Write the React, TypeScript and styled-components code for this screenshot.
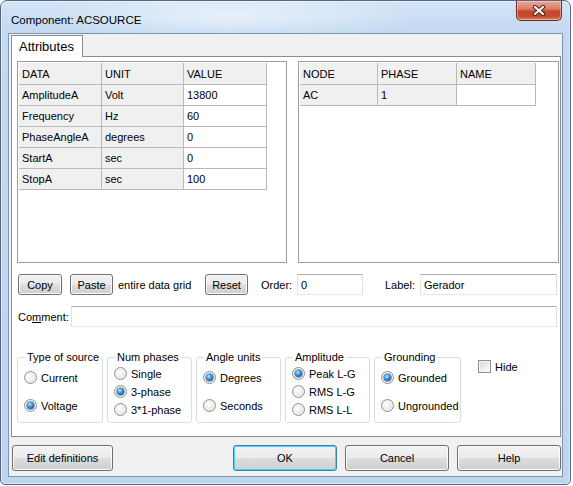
import styled, { createGlobalStyle } from "styled-components";

const GlobalStyle = createGlobalStyle`
  html, body {
    margin: 0;
    padding: 0;
    background: #ffffff;
  }
  body {
    font-family: "Liberation Sans", Arial, sans-serif;
    font-size: 11px;
    color: #000000;
  }
`;

type GridRow = { cells: string[] };

const dataCols = ["DATA", "UNIT", "VALUE"];
const dataRows: GridRow[] = [
  { cells: ["AmplitudeA", "Volt", "13800"] },
  { cells: ["Frequency", "Hz", "60"] },
  { cells: ["PhaseAngleA", "degrees", "0"] },
  { cells: ["StartA", "sec", "0"] },
  { cells: ["StopA", "sec", "100"] }
];

const nodeCols = ["NODE", "PHASE", "NAME"];
const nodeRows: GridRow[] = [{ cells: ["AC", "1", ""] }];

type Group = {
  title: string;
  width: number;
  first: number;
  gap: number;
  options: { label: string; on?: boolean }[];
};

const groups: Group[] = [
  {
    title: "Type of source",
    width: 86,
    first: 7,
    gap: 15,
    options: [{ label: "Current" }, { label: "Voltage", on: true }]
  },
  {
    title: "Num phases",
    width: 85,
    first: 3,
    gap: 5,
    options: [{ label: "Single" }, { label: "3-phase", on: true }, { label: "3*1-phase" }]
  },
  {
    title: "Angle units",
    width: 85,
    first: 7,
    gap: 15,
    options: [{ label: "Degrees", on: true }, { label: "Seconds" }]
  },
  {
    title: "Amplitude",
    width: 85,
    first: 3,
    gap: 5,
    options: [{ label: "Peak L-G", on: true }, { label: "RMS L-G" }, { label: "RMS L-L" }]
  },
  {
    title: "Grounding",
    width: 87,
    first: 7,
    gap: 15,
    options: [{ label: "Grounded", on: true }, { label: "Ungrounded" }]
  }
];

const App = () => {
  return (
    <>
      <GlobalStyle />
      <Window>
        <TitleBar>
          <TitleText>Component: ACSOURCE</TitleText>
          <CloseButton>
            <svg width="14" height="11" viewBox="0 0 14 11">
              <path d="M3 2 L11 9 M11 2 L3 9" stroke="#4a2218" strokeWidth="4.2" strokeLinecap="round" fill="none" />
              <path d="M3 2 L11 9 M11 2 L3 9" stroke="#ffffff" strokeWidth="2.2" strokeLinecap="round" fill="none" />
            </svg>
          </CloseButton>
        </TitleBar>
        <Client>
          <TabStrip>
            <Tab>Attributes</Tab>
          </TabStrip>
          <Panel>
            <GridsRow>
              <GridBox $w={270}>
                <DataGrid $cols="83px 82px 83px">
                  {dataCols.map((c) => (
                    <Cell key={c} $head $fixed>{c}</Cell>
                  ))}
                  {dataRows.map((r) =>
                    r.cells.map((c, i) => (
                      <Cell key={r.cells[0] + i} $fixed={i < 2}>{c}</Cell>
                    ))
                  )}
                </DataGrid>
              </GridBox>
              <GridBox $w={261}>
                <DataGrid $cols="78px 79px 79px">
                  {nodeCols.map((c) => (
                    <Cell key={c} $head $fixed>{c}</Cell>
                  ))}
                  {nodeRows.map((r) =>
                    r.cells.map((c, i) => (
                      <Cell key={r.cells[0] + i} $fixed={i < 2}>{c}</Cell>
                    ))
                  )}
                </DataGrid>
              </GridBox>
            </GridsRow>

            <ControlRow $top={11}>
              <PushButton $w={44} $ml={1}>Copy</PushButton>
              <PushButton $w={43} $ml={8}>Paste</PushButton>
              <Caption $w={87} $ml={5}>entire data grid</Caption>
              <PushButton $w={43}>Reset</PushButton>
              <Caption $w={36} $ml={13}>Order:</Caption>
              <TextBox $w={66} defaultValue="0" />
              <Caption $w={35} $ml={22}>Label:</Caption>
              <TextBox $w={137} defaultValue="Gerador" />
            </ControlRow>

            <ControlRow $top={11}>
              <Caption $w={53} $ml={1}>
                Co<u>m</u>ment:
              </Caption>
              <TextBox $w={486} defaultValue="" />
            </ControlRow>

            <GroupsRow>
              {groups.map((g) => (
                <GroupBox key={g.title} $w={g.width}>
                  <Legend>{g.title}</Legend>
                  <OptionList $first={g.first} $gap={g.gap}>
                    {g.options.map((o) => (
                      <Option key={o.label}>
                        <RadioMark $on={o.on} />
                        <span>{o.label}</span>
                      </Option>
                    ))}
                  </OptionList>
                </GroupBox>
              ))}
              <HideCheck>
                <CheckMark />
                <span>Hide</span>
              </HideCheck>
            </GroupsRow>
          </Panel>

          <BottomBar>
            <PushButton $w={101} $h={26} $ml={1}>Edit definitions</PushButton>
            <Spacer />
            <PushButton $w={104} $h={26} $default>OK</PushButton>
            <PushButton $w={104} $h={26} $ml={8}>Cancel</PushButton>
            <PushButton $w={104} $h={26} $ml={8}>Help</PushButton>
          </BottomBar>
        </Client>
      </Window>
    </>
  );
};

export default App;

const Window = styled.div`
  width: 571px;
  height: 485px;
  box-sizing: border-box;
  border: 1px solid #56677e;
  border-radius: 7px 7px 5px 5px;
  padding: 0 7px 7px;
  display: flex;
  flex-direction: column;
  background:
    radial-gradient(ellipse 190px 26px at 230px 15px, rgba(255, 255, 255, 0.55), rgba(255, 255, 255, 0) 100%),
    linear-gradient(180deg, #d3e4f7 0px, #c3d9f1 31px, #bdd5f0 100%);
  box-shadow: inset 0 0 0 1px rgba(255, 255, 255, 0.45);
`;

const TitleBar = styled.div`
  height: 32px;
  display: flex;
  justify-content: space-between;
  align-items: flex-start;
  flex: none;
`;

const TitleText = styled.div`
  margin-left: 3px;
  padding-top: 12px;
  font-size: 11.5px;
  line-height: 14px;
  color: #000000;
`;

const CloseButton = styled.div`
  width: 46px;
  height: 20px;
  margin-right: 1px;
  box-sizing: border-box;
  border: 1px solid #6a2a1f;
  border-top: none;
  border-radius: 0 0 5px 5px;
  display: flex;
  align-items: center;
  justify-content: center;
  background: linear-gradient(180deg, #e9a99a 0%, #dc7f69 40%, #c7462b 55%, #c64a2f 80%, #d8846a 100%);
  box-shadow: inset 0 0 0 1px rgba(255, 220, 210, 0.5);
`;

const Client = styled.div`
  flex: 1;
  box-sizing: border-box;
  background: #f0f0f0;
  border: 1px solid #8194ad;
  padding: 1px 1px 0 2px;
  display: flex;
  flex-direction: column;
`;

const TabStrip = styled.div`
  display: flex;
  height: 22px;
  margin-bottom: -1px;
  position: relative;
  z-index: 1;
`;

const Tab = styled.div`
  box-sizing: border-box;
  height: 22px;
  padding: 0 8px 0 7px;
  border: 1px solid #898c95;
  border-bottom: none;
  background: #ffffff;
  font-size: 13px;
  line-height: 21px;
`;

const Panel = styled.div`
  width: 550px;
  height: 381px;
  box-sizing: border-box;
  border: 1px solid #898c95;
  background: #ffffff;
  padding: 4px 0 0 5px;
  display: flex;
  flex-direction: column;
`;

const GridsRow = styled.div`
  display: flex;
  gap: 11px;
  height: 202px;
`;

const GridBox = styled.div<{ $w: number }>`
  width: ${(p) => p.$w}px;
  height: 100%;
  box-sizing: border-box;
  border: 1px solid #9c9c9c;
  padding: 1px;
  background: #ffffff;
`;

const DataGrid = styled.div<{ $cols: string }>`
  display: grid;
  grid-template-columns: ${(p) => p.$cols};
`;

const Cell = styled.div<{ $head?: boolean; $fixed?: boolean }>`
  height: ${(p) => (p.$head ? 22 : 21)}px;
  box-sizing: border-box;
  border-right: 1px solid #b9b9b9;
  border-bottom: 1px solid #b9b9b9;
  background: ${(p) => (p.$fixed ? "#f0f0f0" : "#ffffff")};
  padding: 0 3px;
  display: flex;
  align-items: center;
  white-space: nowrap;
  overflow: hidden;
`;

const ControlRow = styled.div<{ $top: number }>`
  display: flex;
  align-items: center;
  height: 21px;
  margin-top: ${(p) => p.$top}px;
`;

const Caption = styled.div<{ $w: number; $ml?: number }>`
  width: ${(p) => p.$w}px;
  margin-left: ${(p) => p.$ml ?? 0}px;
  flex: none;
  white-space: nowrap;
`;

const PushButton = styled.div<{ $w: number; $h?: number; $ml?: number; $default?: boolean }>`
  width: ${(p) => p.$w}px;
  height: ${(p) => p.$h ?? 21}px;
  margin-left: ${(p) => p.$ml ?? 0}px;
  flex: none;
  box-sizing: border-box;
  border: 1px solid ${(p) => (p.$default ? "#3c7fb1" : "#707070")};
  border-radius: 3px;
  display: flex;
  align-items: center;
  justify-content: center;
  background: linear-gradient(180deg, #f2f2f2 0%, #ebebeb 48%, #dddddd 52%, #cfcfcf 100%);
  box-shadow: inset 0 0 0 1px ${(p) => (p.$default ? "#48d2f6" : "#fbfbfb")};
`;

const TextBox = styled.input<{ $w: number }>`
  width: ${(p) => p.$w}px;
  height: 21px;
  flex: none;
  box-sizing: border-box;
  margin: 0;
  padding: 0 3px;
  border: 1px solid;
  border-color: #abadb3 #dbdfe6 #e3e9ef #e2e3ea;
  background: #ffffff;
  font-family: "Liberation Sans", Arial, sans-serif;
  font-size: 11px;
  color: #000000;
  outline: none;
`;

const GroupsRow = styled.div`
  display: flex;
  align-items: flex-start;
  gap: 4px;
  margin-top: 30px;
`;

const GroupBox = styled.div<{ $w: number }>`
  width: ${(p) => p.$w}px;
  height: 66px;
  box-sizing: border-box;
  border: 1px solid #d5dfe5;
  border-radius: 3px;
  padding-left: 6px;
  display: flex;
  flex-direction: column;
  align-items: flex-start;
`;

const Legend = styled.div`
  margin-top: -7px;
  margin-left: 1px;
  padding: 0 2px;
  background: #ffffff;
  line-height: 13px;
  white-space: nowrap;
`;

const OptionList = styled.div<{ $first: number; $gap: number }>`
  display: flex;
  flex-direction: column;
  gap: ${(p) => p.$gap}px;
  margin-top: ${(p) => p.$first}px;
`;

const Option = styled.div`
  display: flex;
  align-items: center;
  gap: 4px;
  height: 13px;
  white-space: nowrap;
`;

const RadioMark = styled.span<{ $on?: boolean }>`
  width: 13px;
  height: 13px;
  flex: none;
  box-sizing: border-box;
  border-radius: 50%;
  border: 1px solid #8e8f8f;
  background: radial-gradient(circle at 40% 40%, #ffffff 0%, #eeeeee 45%, #cfcfcf 100%);
  box-shadow: inset 0 0 0 1px #f4f4f4;
  display: flex;
  align-items: center;
  justify-content: center;

  &::after {
    content: "";
    display: ${(p) => (p.$on ? "block" : "none")};
    width: 7px;
    height: 7px;
    border-radius: 50%;
    background: radial-gradient(circle at 40% 35%, #b8ecff 0%, #3c95dc 40%, #16508f 85%);
    box-shadow: 0 0 0 0.5px #1c4a7d;
  }
`;

const HideCheck = styled.div`
  display: flex;
  align-items: center;
  gap: 4px;
  margin-left: 13px;
  margin-top: 3px;
  height: 13px;
`;

const CheckMark = styled.span`
  width: 13px;
  height: 13px;
  flex: none;
  box-sizing: border-box;
  border: 1px solid #8e8f8f;
  background: linear-gradient(135deg, #d6d6d6 0%, #f4f4f4 70%, #ffffff 100%);
  box-shadow: inset 0 0 0 1px #f5f5f5;
`;

const BottomBar = styled.div`
  display: flex;
  align-items: flex-start;
  width: 550px;
  margin-top: 8px;
`;

const Spacer = styled.div`
  flex: 1;
`;
